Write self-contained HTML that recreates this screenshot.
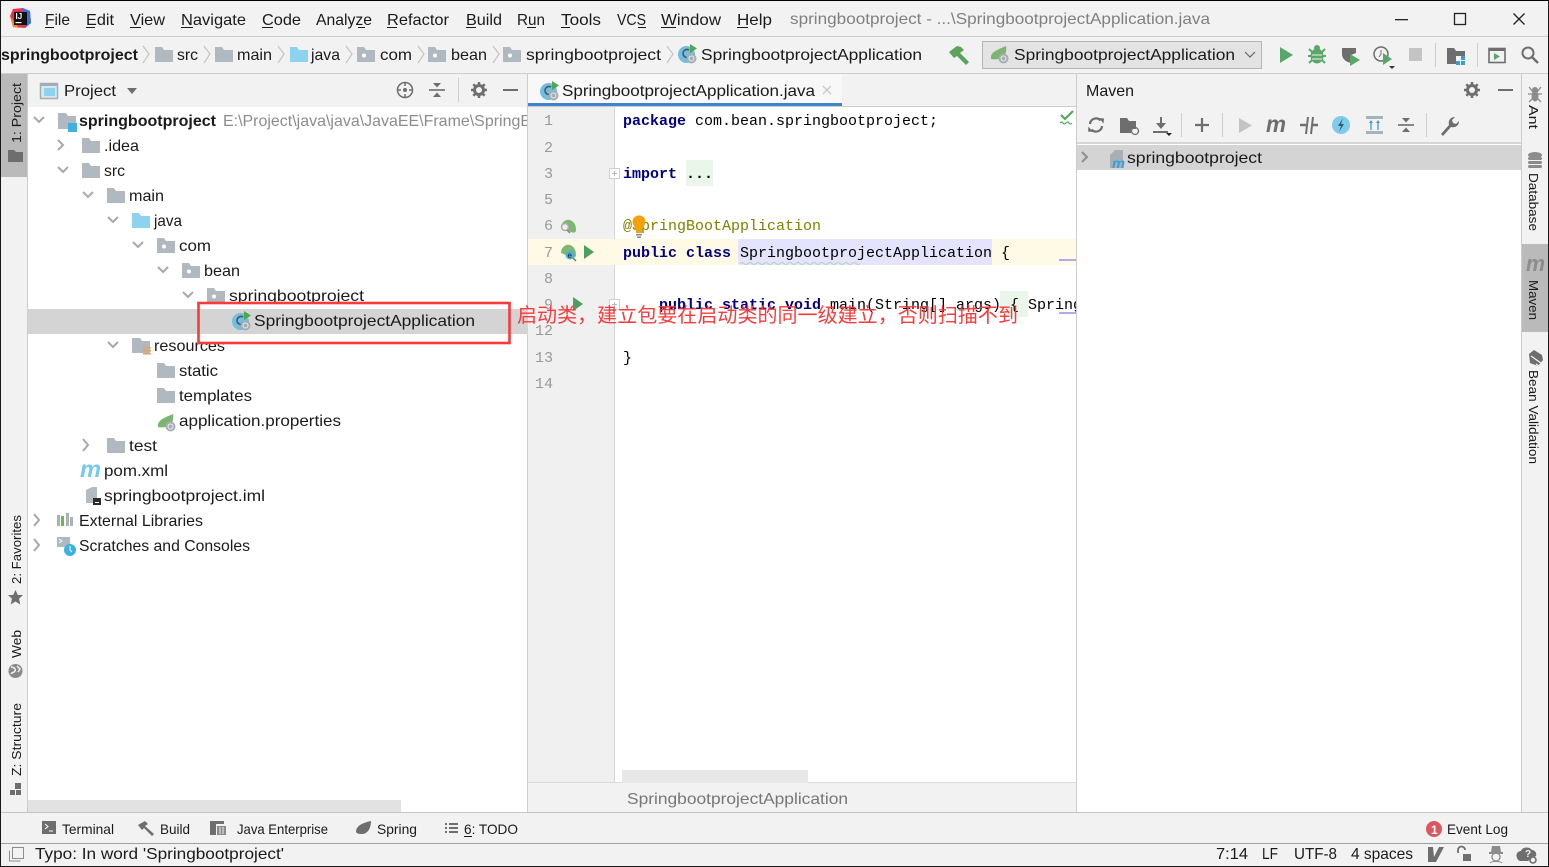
<!DOCTYPE html>
<html><head><meta charset="utf-8"><style>
html,body{margin:0;padding:0;background:#fff;width:1549px;height:867px;overflow:hidden}
svg{display:block}
text{font-family:"Liberation Sans","Noto Sans CJK SC",sans-serif;font-size:16px;fill:#1a1a1a;white-space:pre}
.m{font-family:"Liberation Mono",monospace;font-size:15px}
.b{font-weight:bold}.k{font-family:"Liberation Mono",monospace;font-size:15px;font-weight:bold;fill:#000080}
.n{font-family:"Liberation Mono",monospace;font-size:15px;fill:#999;text-anchor:end}
.s{font-size:14px}.v{font-size:13px}
.ic{fill:none;stroke:#6e6e6e;stroke-width:2}
</style></head><body>
<svg xmlns="http://www.w3.org/2000/svg" width="1549" height="867" viewBox="0 0 1549 867">
<defs>
<symbol id="f" viewBox="0 0 18 15" overflow="visible"><path d="M0 0h7l2 3h9v12H0z" fill="#b0b9c0"/></symbol>
<symbol id="fb" viewBox="0 0 18 15" overflow="visible"><path d="M0 0h7l2 3h9v12H0z" fill="#8dd2ef"/></symbol>
<symbol id="fp" viewBox="0 0 18 15" overflow="visible"><path d="M0 0h7l2 3h9v12H0z" fill="#b0b9c0"/><circle cx="7" cy="8.5" r="2" fill="#fff"/></symbol>
<symbol id="cls" viewBox="0 0 20 20" overflow="visible"><circle cx="8.5" cy="10.5" r="8.5" fill="#74bde0"/><path d="M11 6A4 4 0 1 0 11 13" fill="none" stroke="#3f5a68" stroke-width="1.6"/><path d="M12 0l7 4.500-7 4.500z" fill="#4fa74f"/><circle cx="13.500" cy="14.500" r="5" fill="#a7aeb3"/><circle cx="13.500" cy="14.500" r="2.500" fill="none" stroke="#e9e9e9"/></symbol>
<symbol id="leaf" viewBox="0 0 20 18" overflow="visible"><path d="M1 13C0 6 7 4 16 0c1 6-1 12-7 13-3 .5-6 .5-8 0z" fill="#7cb56e"/><circle cx="13.500" cy="12.500" r="5" fill="#a7aeb3"/><circle cx="13.500" cy="12.500" r="2.500" fill="none" stroke="#eee"/></symbol>
<symbol id="gear" viewBox="0 0 16 16" overflow="visible"><circle cx="8" cy="8" r="4.500" fill="none" stroke="#6e6e6e" stroke-width="3"/><path d="M8 0v3M8 13v3M0 8h3M13 8h3M2.300 2.300l2 2M11.700 11.700l2 2M2.300 13.700l2-2M11.700 4.300l2-2" stroke="#6e6e6e" stroke-width="2.500"/></symbol>
<symbol id="coll" viewBox="0 0 16 16" overflow="visible"><path d="M0 8h16" stroke="#6e6e6e" stroke-width="1.600"/><path d="M4 1h8L8 5.500zM4 15h8L8 10.500z" fill="#6e6e6e"/></symbol>
</defs>

<!-- base -->
<rect width="1549" height="867" fill="#f2f2f2"/>
<rect x="28" y="107" width="499" height="705" fill="#fff"/>
<rect x="1077" y="143" width="444" height="669" fill="#fff"/>
<rect x="615" y="107" width="461" height="676" fill="#fff"/>
<rect x="528" y="107" width="87" height="676" fill="#f0f0f0"/>

<!-- lines -->
<rect y="36" width="1549" height="1" fill="#cdcdcd"/>
<rect y="73" width="1549" height="1" fill="#cdcdcd"/>
<rect x="27" y="74" width="1" height="738" fill="#cdcdcd"/>
<rect x="527" y="74" width="1" height="738" fill="#cdcdcd"/>
<rect x="1076" y="74" width="1" height="738" fill="#cdcdcd"/>
<rect x="1521" y="74" width="1" height="738" fill="#cdcdcd"/>
<rect y="812" x="0" width="1549" height="1" fill="#c4c4c4"/>
<rect y="843" x="0" width="1549" height="1" fill="#9f9f9f"/>
<rect x="528" y="106" width="548" height="1" fill="#cdcdcd"/>
<rect x="1077" y="142" width="444" height="2" fill="#d6d6d6"/>
<rect x="614" y="107" width="1" height="676" fill="#d5d5d5"/>
<rect x="528" y="782" width="548" height="1" fill="#dcdcdc"/>

<!-- title / menu -->
<g transform="translate(10,8)">
<path d="M3 1L13 0 20 3 21 15 15 20 3 19 0 8z" fill="#e8334e"/><path d="M12 0l8 3 1 12-6 5z" fill="#3d6fe0"/><path d="M0 8l3 11 6 1z" fill="#f08a24"/>
<rect x="4" y="4" width="13" height="13" fill="#111"/><text x="5.500" y="11" style="font-size:8px;font-weight:bold;fill:#fff">IJ</text><rect x="5.500" y="14" width="6" height="1.200" fill="#fff"/>
</g>
<text x="45" y="25" textLength="25" lengthAdjust="spacingAndGlyphs">File</text>
<text x="86" y="25" textLength="28" lengthAdjust="spacingAndGlyphs">Edit</text>
<text x="130" y="25" textLength="35" lengthAdjust="spacingAndGlyphs">View</text>
<text x="181" y="25" textLength="65" lengthAdjust="spacingAndGlyphs">Navigate</text>
<text x="262" y="25" textLength="39" lengthAdjust="spacingAndGlyphs">Code</text>
<text x="316" y="25" textLength="56" lengthAdjust="spacingAndGlyphs">Analyze</text>
<text x="387" y="25" textLength="62" lengthAdjust="spacingAndGlyphs">Refactor</text>
<text x="466" y="25" textLength="36" lengthAdjust="spacingAndGlyphs">Build</text>
<text x="517" y="25" textLength="28" lengthAdjust="spacingAndGlyphs">Run</text>
<text x="561" y="25" textLength="40" lengthAdjust="spacingAndGlyphs">Tools</text>
<text x="617" y="25" textLength="29" lengthAdjust="spacingAndGlyphs">VCS</text>
<text x="661" y="25" textLength="60" lengthAdjust="spacingAndGlyphs">Window</text>
<text x="737" y="25" textLength="35" lengthAdjust="spacingAndGlyphs">Help</text>
<g fill="#1a1a1a">
<rect x="45" y="27" width="9" height="1"/><rect x="86" y="27" width="9" height="1"/><rect x="130" y="27" width="11" height="1"/><rect x="181" y="27" width="12" height="1"/><rect x="262" y="27" width="11" height="1"/><rect x="358" y="27" width="7" height="1"/><rect x="387" y="27" width="10" height="1"/><rect x="466" y="27" width="10" height="1"/><rect x="527" y="27" width="9" height="1"/><rect x="561" y="27" width="9" height="1"/><rect x="638" y="27" width="8" height="1"/><rect x="661" y="27" width="15" height="1"/><rect x="737" y="27" width="11" height="1"/>
</g>
<text x="790" y="24" textLength="420" lengthAdjust="spacingAndGlyphs" style="fill:#808080">springbootproject - ...\SpringbootprojectApplication.java</text>
<rect x="1395" y="19" width="13" height="1.300" fill="#222"/>
<rect x="1454.500" y="13.500" width="11" height="11" fill="none" stroke="#222" stroke-width="1.300"/>
<path d="M1513.500 13.500l11 11M1524.500 13.500l-11 11" stroke="#222" stroke-width="1.300"/>

<!-- nav bar -->
<text class="b" x="1" y="60" textLength="137" lengthAdjust="spacingAndGlyphs">springbootproject</text>
<g fill="none" stroke="#c4c4c4" stroke-width="1.200">
<path d="M143 46l6 8-6 9M204 46l6 8-6 9M278 46l6 8-6 9M346 46l6 8-6 9M418 46l6 8-6 9M493 46l6 8-6 9M667 46l6 8-6 9"/>
</g>
<use href="#f" x="155" y="47" width="18" height="15"/><text x="177" y="60" textLength="21" lengthAdjust="spacingAndGlyphs">src</text>
<use href="#f" x="215" y="47" width="18" height="15"/><text x="237" y="60" textLength="35" lengthAdjust="spacingAndGlyphs">main</text>
<use href="#fb" x="290" y="47" width="18" height="15"/><text x="311" y="60" textLength="29" lengthAdjust="spacingAndGlyphs">java</text>
<use href="#fp" x="357" y="47" width="18" height="15"/><text x="380" y="60" textLength="32" lengthAdjust="spacingAndGlyphs">com</text>
<use href="#fp" x="428" y="47" width="18" height="15"/><text x="451" y="60" textLength="36" lengthAdjust="spacingAndGlyphs">bean</text>
<use href="#fp" x="503" y="47" width="18" height="15"/><text x="526" y="60" textLength="135" lengthAdjust="spacingAndGlyphs">springbootproject</text>
<use href="#cls" x="678" y="44" width="20" height="20"/><text x="701" y="60" textLength="221" lengthAdjust="spacingAndGlyphs">SpringbootprojectApplication</text>
<!-- hammer -->
<path d="M949 52l8-6 4 1 3 3-4 3 9 9-3 3-9-9-3 2z" fill="#5ba35b"/>
<!-- combo -->
<rect x="982.500" y="41.500" width="279" height="27" fill="#e3e3e3" stroke="#b4b4b4"/>
<use href="#leaf" x="990" y="46" width="20" height="18"/>
<text x="1014" y="60" textLength="221" lengthAdjust="spacingAndGlyphs">SpringbootprojectApplication</text>
<path d="M1245 52l5 5 5-5" fill="none" stroke="#666" stroke-width="1.200"/>
<!-- run icons -->
<path d="M1280 47l13 8-13 8z" fill="#59a869"/>
<g fill="#59a869"><ellipse cx="1317" cy="56" rx="6.500" ry="7.500"/><path d="M1309 49l3 3M1325 49l-3 3M1308 56h4M1326 56h-4M1309 63l3-3M1325 63l-3-3" stroke="#59a869" stroke-width="2"/><circle cx="1317" cy="48" r="3"/></g>
<path d="M1312 55h10M1312 59h10" stroke="#f2f2f2"/>
<path d="M1342 48h14v5l-5 2v8c-5-1-9-4-9-9z" fill="#6e6e6e"/><path d="M1350 54l10 6-10 6z" fill="#59a869"/>
<circle cx="1381" cy="54" r="7" fill="none" stroke="#6e6e6e" stroke-width="1.500"/><path d="M1381 50v4l-2 3" stroke="#6e6e6e" fill="none"/><path d="M1383 53l9 6-9 6z" fill="#59a869"/><path d="M1389 66h6l-3 3z" fill="#333"/>
<rect x="1409" y="48" width="13" height="13" fill="#c4c4c4"/>
<rect x="1435" y="43" width="1" height="24" fill="#cdcdcd"/>
<path d="M1447 48h7l2 3h9v13h-18z" fill="#6e6e6e"/><rect x="1456" y="56" width="9" height="9" fill="#f2f2f2"/><g fill="#389fd6"><rect x="1461" y="56" width="4" height="4"/><rect x="1456" y="61" width="4" height="4"/><rect x="1461" y="61" width="4" height="4"/></g>
<rect x="1477" y="43" width="1" height="24" fill="#cdcdcd"/>
<rect x="1489" y="48.500" width="16" height="14" fill="none" stroke="#6e6e6e" stroke-width="1.600"/><rect x="1489" y="48" width="16" height="3" fill="#6e6e6e"/><path d="M1494 53l6 3.500-6 3.500z" fill="#59a869"/>
<circle cx="1528" cy="53" r="5.500" fill="none" stroke="#6e6e6e" stroke-width="2"/><path d="M1532 57l6 6" stroke="#6e6e6e" stroke-width="2.400"/>

<!-- left strip -->
<rect x="1" y="74" width="26" height="103" fill="#bababa"/>
<text class="v" transform="translate(21,143) rotate(-90)" textLength="60" lengthAdjust="spacingAndGlyphs">1: Project</text>
<path d="M8 150h6l2 2h7v10H8z" fill="#6e6e6e"/>
<text class="v" transform="translate(21,584) rotate(-90)" textLength="69" lengthAdjust="spacingAndGlyphs">2: Favorites</text>
<path d="M15.500 590l2.300 5h5.200l-4 3.800 1.300 5.700-4.800-3-4.800 3 1.300-5.700-4-3.800h5.200z" fill="#6e6e6e"/>
<text class="v" transform="translate(21,658) rotate(-90)" textLength="28" lengthAdjust="spacingAndGlyphs">Web</text>
<circle cx="15.500" cy="671" r="7" fill="#8a8a8a"/><path d="M11 667c3 0 5 2 4 4s-3 1-4 3M17 666l3 3-2 3" fill="none" stroke="#f2f2f2" stroke-width="1.500"/>
<text class="v" transform="translate(21,776) rotate(-90)" textLength="73" lengthAdjust="spacingAndGlyphs">Z: Structure</text>
<g fill="#6e6e6e"><rect x="15" y="783" width="6" height="6"/><rect x="10" y="790" width="5" height="5"/><rect x="16" y="790" width="5" height="5"/></g>

<!-- project header -->
<rect x="40.500" y="83.500" width="17" height="15" fill="#d6e9f2" stroke="#a5acb2" stroke-width="1.500"/><rect x="40" y="83" width="18" height="3" fill="#a5acb2"/>
<rect x="44" y="88" width="11" height="8" fill="#8dd2ef"/>
<text x="64" y="96" textLength="52" lengthAdjust="spacingAndGlyphs">Project</text>
<path d="M127 88h10l-5 6z" fill="#6e6e6e"/>
<circle cx="405" cy="90" r="7.500" fill="none" stroke="#6e6e6e" stroke-width="1.500"/><circle cx="405" cy="90" r="2" fill="#6e6e6e"/><path d="M405 82v4M405 94v4M397 90h4M409 90h4" stroke="#6e6e6e" stroke-width="1.500"/>
<use href="#coll" x="429" y="82" width="16" height="16"/>
<rect x="458" y="78" width="1" height="24" fill="#cdcdcd"/>
<use href="#gear" x="471" y="82" width="16" height="16"/>
<rect x="503" y="89" width="15" height="2" fill="#6e6e6e"/>

<!-- tree -->
<g fill="none" stroke="#a8a8a8" stroke-width="2">
<path d="M34 117l5 5 5-5M58 140l5 5 -5 5M58 167l5 5 5-5M83 192l5 5 5-5M108 217l5 5 5-5M133 242l5 5 5-5M158 267l5 5 5-5M183 292l5 5 5-5M108 342l5 5 5-5M83 439l5 6-5 6M34 514l5 6-5 6M34 539l5 6-5 6" />
</g>
<path d="M58 113h8l2 3h8v13H58z" fill="#b0b9c0"/><rect x="68" y="123" width="9" height="9" fill="#3fb0e0"/>
<text class="b" x="79" y="126" textLength="137" lengthAdjust="spacingAndGlyphs">springbootproject</text>
<svg x="223" y="110" width="304" height="24"><text x="0" y="16" textLength="308" lengthAdjust="spacingAndGlyphs" style="fill:#8c8c8c">E:\Project\java\java\JavaEE\Frame\SpringB</text></svg>
<use href="#f" x="82" y="138" width="18" height="15"/><text x="104" y="151" textLength="35" lengthAdjust="spacingAndGlyphs">.idea</text>
<use href="#f" x="82" y="163" width="18" height="15"/><text x="104" y="176" textLength="21" lengthAdjust="spacingAndGlyphs">src</text>
<use href="#f" x="107" y="188" width="18" height="15"/><text x="129" y="201" textLength="35" lengthAdjust="spacingAndGlyphs">main</text>
<use href="#fb" x="132" y="213" width="18" height="15"/><text x="154" y="226" textLength="28" lengthAdjust="spacingAndGlyphs">java</text>
<use href="#fp" x="157" y="238" width="18" height="15"/><text x="179" y="251" textLength="32" lengthAdjust="spacingAndGlyphs">com</text>
<use href="#fp" x="182" y="263" width="18" height="15"/><text x="204" y="276" textLength="36" lengthAdjust="spacingAndGlyphs">bean</text>
<use href="#fp" x="207" y="288" width="18" height="15"/><text x="229" y="301" textLength="135" lengthAdjust="spacingAndGlyphs">springbootproject</text>

<!-- resources row first so red box clips it -->
<path d="M132 338h8l2 3h8v12h-18z" fill="#b0b9c0"/><g fill="#e2a35c"><rect x="143" y="347" width="8" height="1.500"/><rect x="143" y="350" width="8" height="1.500"/><rect x="143" y="353" width="8" height="1.500"/></g>
<text x="154" y="351" textLength="71" lengthAdjust="spacingAndGlyphs">resources</text>

<!-- selected row + red box -->
<rect x="199" y="303" width="310" height="41" fill="#fff"/>
<rect x="28" y="309" width="499" height="25" fill="#d4d4d4"/>
<use href="#cls" x="232" y="311" width="20" height="20"/>
<text x="254" y="326" textLength="221" lengthAdjust="spacingAndGlyphs">SpringbootprojectApplication</text>
<rect x="198.500" y="303" width="311" height="40" fill="none" stroke="#f93a3a" stroke-width="2.600"/>

<use href="#f" x="157" y="363" width="18" height="15"/><text x="179" y="376" textLength="39" lengthAdjust="spacingAndGlyphs">static</text>
<use href="#f" x="157" y="388" width="18" height="15"/><text x="179" y="401" textLength="73" lengthAdjust="spacingAndGlyphs">templates</text>
<use href="#leaf" x="157" y="414" width="20" height="18"/><text x="179" y="426" textLength="162" lengthAdjust="spacingAndGlyphs">application.properties</text>
<use href="#f" x="107" y="438" width="18" height="15"/><text x="129" y="451" textLength="28" lengthAdjust="spacingAndGlyphs">test</text>
<text x="80" y="477" textLength="21" lengthAdjust="spacingAndGlyphs" style="font-size:23px;font-weight:bold;font-style:italic;fill:#75c9ec">m</text><text x="104" y="476" textLength="64" lengthAdjust="spacingAndGlyphs">pom.xml</text>
<path d="M86 490l6-3h5v16h-11z" fill="#b4bcc2"/><rect x="93" y="498" width="8" height="7" fill="#2b2b2b"/><rect x="95" y="502" width="4" height="1" fill="#fff"/>
<text x="104" y="501" textLength="161" lengthAdjust="spacingAndGlyphs">springbootproject.iml</text>
<g fill="#a9b2b9"><rect x="57" y="515" width="3" height="11"/><rect x="66" y="513" width="3" height="13"/><rect x="70" y="517" width="3" height="9"/></g><rect x="61" y="516" width="3" height="10" fill="#6fb64d"/>
<text x="79" y="526" textLength="124" lengthAdjust="spacingAndGlyphs">External Libraries</text>
<rect x="57" y="537" width="13" height="10" fill="#b0b9c0"/><path d="M59 539l3 2-3 2" fill="none" stroke="#fff"/><circle cx="70" cy="550" r="6" fill="#3cb0e0"/><path d="M70 546v4l2 2" stroke="#fff" fill="none"/>
<text x="79" y="551" textLength="171" lengthAdjust="spacingAndGlyphs">Scratches and Consoles</text>
<rect x="28" y="800" width="373" height="12" fill="#e2e2e2"/>

<!-- tabs -->
<rect x="528" y="74" width="314" height="29" fill="#f8f8f8"/>
<rect x="528" y="103" width="314" height="3" fill="#4083c9"/>
<use href="#cls" x="540" y="81" width="20" height="20"/>
<text x="562" y="96" textLength="253" lengthAdjust="spacingAndGlyphs">SpringbootprojectApplication.java</text>
<path d="M823 86l8 8M831 86l-8 8" stroke="#c8c8c8" stroke-width="1.300"/>

<!-- editor -->
<rect x="528" y="239" width="87" height="26" fill="#fff9e6"/>
<rect x="615" y="239" width="461" height="26" fill="#fffae6"/>
<rect x="738" y="239" width="254" height="26" fill="#e4e4ff"/>
<rect x="686" y="160" width="27" height="26" fill="#e9f6e9"/>
<rect x="1000" y="291" width="28" height="26" fill="#e9f6e9"/>
<path d="M740 263.500q2 -2 4 0t4 0 4 0 4 0 4 0 4 0 4 0 4 0 4 0 4 0 4 0 4 0 4 0 4 0 4 0 4 0 4 0 4 0 4 0 4 0 4 0 4 0 4 0 4 0 4 0 4 0 4 0 4 0 4 0 4 0" fill="none" stroke="#b6d0b6"/>
<g>
<text class="n" x="553" y="125">1</text><text class="n" x="553" y="152">2</text><text class="n" x="553" y="178">3</text><text class="n" x="553" y="204">5</text><text class="n" x="553" y="230">6</text><text class="n" x="553" y="257">7</text><text class="n" x="553" y="283">8</text><text class="n" x="553" y="309">9</text><text class="n" x="553" y="335">12</text><text class="n" x="553" y="362">13</text><text class="n" x="553" y="388">14</text>
</g>
<text class="k" x="623" y="125">package</text><text class="m" x="695" y="125" style="fill:#000">com.bean.springbootproject;</text>
<rect x="609.500" y="168.500" width="10" height="10" fill="#fff" stroke="#d0d0d0"/><path d="M612 173.500h5M614.500 171v5" stroke="#b8b8b8"/>
<text class="k" x="623" y="178">import</text><text class="m" x="686" y="178" style="fill:#000;font-weight:bold">...</text>
<text class="m" x="623" y="230" style="fill:#808000">@SpringBootApplication</text>
<path d="M634 226a6.500 6.500 0 1 1 10 0l-2 5v2h-6v-2z" fill="#f0a30a"/><rect x="636" y="234" width="6" height="1.500" fill="#888"/><rect x="637" y="236.500" width="4" height="1.500" fill="#888"/>
<path d="M561 228c0-6 5-9 9-8 5 2 6 6 6 10 0 3-3 3-5 2z" fill="#7db86e"/><circle cx="565" cy="227" r="3.500" fill="#eee" stroke="#aaa" stroke-width="1.500"/><path d="M567 230l3 3" stroke="#888" stroke-width="1.500"/>
<path d="M561 253c0-6 5-9 9-8 5 2 6 6 6 10 0 3-3 3-5 2z" fill="#7db86e"/><circle cx="570" cy="255" r="4.500" fill="#4db2db"/><text x="567.500" y="258" style="font-size:8px;fill:#222">e</text><path d="M573 258l3 3" stroke="#777" stroke-width="1.500"/>
<path d="M584 245l10 7-10 7z" fill="#4d9e5f"/>
<text class="k" x="623" y="257">public</text><text class="k" x="686" y="257">class</text>
<text class="m" x="740" y="257" style="fill:#000">SpringbootprojectApplication</text><text class="m" x="1001" y="257" style="fill:#000">{</text>
<path d="M573 297l10 7-10 7z" fill="#4d9e5f"/>
<rect x="609.500" y="299.500" width="10" height="10" fill="#fff" stroke="#d0d0d0"/><path d="M612 304.500h5M614.500 302v5" stroke="#b8b8b8"/>
<text class="k" x="659" y="309">public</text><text class="k" x="722" y="309">static</text><text class="k" x="785" y="309">void</text>
<text class="m" x="830" y="309" style="fill:#000">main(String[] args)</text><text class="m" x="1010" y="309" style="fill:#000">{</text>
<svg x="1028" y="295" width="48" height="24"><text class="m" x="0" y="14" style="fill:#000">Spring</text></svg>
<text class="m" x="623" y="362" style="fill:#000">}</text>
<rect x="1059" y="259" width="17" height="2" fill="#b9a7ee"/>
<rect x="1059" y="312" width="17" height="2" fill="#b9a7ee"/>
<path d="M1061 115l4 4 8-8" fill="none" stroke="#52a85c" stroke-width="2.200"/><path d="M1060 123q2-2 3 0t3 0 3 0 3 0" fill="none" stroke="#52a85c" stroke-width="1.200"/>
<rect x="622" y="770" width="186" height="13" fill="#e8e8e8"/>
<rect x="528" y="783" width="548" height="29" fill="#f2f2f2"/>
<text x="627" y="804" textLength="221" lengthAdjust="spacingAndGlyphs" style="fill:#777">SpringbootprojectApplication</text>

<!-- Red annotation -->
<rect x="518" y="309" width="10" height="25" fill="#d4d4d4"/>
<text x="517" y="322" textLength="501" lengthAdjust="spacingAndGlyphs" style="font-size:20px;fill:#f93a3a;font-family:'Noto Sans CJK SC','WenQuanYi Zen Hei',sans-serif;font-weight:400">启动类，建立包要在启动类的同一级建立，否则扫描不到</text>

<!-- Maven -->
<text x="1086" y="96" textLength="48" lengthAdjust="spacingAndGlyphs">Maven</text>
<use href="#gear" x="1464" y="82" width="16" height="16"/>
<rect x="1498" y="89" width="15" height="2" fill="#6e6e6e"/>
<g fill="none" stroke="#6e6e6e" stroke-width="2.200"><path d="M1090 124a6 6 0 0 1 10.500-3.500M1102 126a6 6 0 0 1-10.500 3.500"/></g>
<path d="M1099 118l5 .5-.5 5zM1093 132l-5-.5.5-5z" fill="#6e6e6e"/>
<path d="M1120 118h7l2 3h7v8h-5v4h-11z" fill="#6e6e6e"/><circle cx="1135" cy="131" r="3.500" fill="none" stroke="#6e6e6e" stroke-width="1.300"/>
<path d="M1161 117v10" stroke="#6e6e6e" stroke-width="2"/><path d="M1156 123h10l-5 6z" fill="#6e6e6e"/><rect x="1153" y="131" width="15" height="2" fill="#6e6e6e"/><path d="M1166 133h6l-3 3z" fill="#222"/>
<rect x="1181" y="113" width="1" height="24" fill="#cdcdcd"/>
<path d="M1202 118v14M1195 125h14" stroke="#6e6e6e" stroke-width="2.200"/>
<rect x="1222" y="113" width="1" height="24" fill="#cdcdcd"/>
<path d="M1239 118l13 7.500-13 7.500z" fill="#c4c4c4"/>
<text x="1266" y="132" textLength="20" lengthAdjust="spacingAndGlyphs" style="font-size:23px;font-weight:bold;font-style:italic;fill:#6e6e6e">m</text>
<path d="M1300 125h6M1312 125h6" stroke="#6e6e6e" stroke-width="2.400"/><path d="M1308 117l-2 17M1313 117l-2 17" stroke="#6e6e6e" stroke-width="2"/>
<circle cx="1341" cy="125" r="9" fill="#7fcbec"/><path d="M1343 118l-5 8h3l-2 6 5-8h-3z" fill="#3a5a6a"/>
<rect x="1366" y="116" width="17" height="3" fill="#aab2b8"/><rect x="1366" y="131" width="17" height="3" fill="#aab2b8"/><path d="M1371 130v-8M1378 130v-8" stroke="#389fd6" stroke-width="1.300"/><path d="M1369 123l2-3 2 3zM1376 123l2-3 2 3z" fill="#389fd6"/>
<use href="#coll" x="1398" y="117" width="16" height="16"/>
<rect x="1426" y="113" width="1" height="24" fill="#cdcdcd"/>
<path d="M1441 134l8-9c-1-4 1-8 6-8l-3 3 1 3 3 1 3-3c0 5-4 7-8 6l-8 9z" fill="#6e6e6e"/>
<rect x="1077" y="145" width="444" height="25" fill="#d4d4d4"/>
<path d="M1082 152l5 5-5 5" fill="none" stroke="#8f8f8f" stroke-width="2"/>
<path d="M1110 155l5-5h8v18h-13z" fill="#a6afb6"/><text x="1112" y="168" textLength="13" lengthAdjust="spacingAndGlyphs" style="font-size:14px;font-weight:bold;font-style:italic;fill:#389fd6">m</text>
<text x="1127" y="163" textLength="135" lengthAdjust="spacingAndGlyphs">springbootproject</text>

<!-- right strip -->
<rect x="1522" y="244" width="26" height="88" fill="#bababa"/>
<g fill="#8c8c8c" stroke="#8c8c8c"><circle cx="1535" cy="90" r="2.500"/><ellipse cx="1535" cy="96" rx="3" ry="5"/><path d="M1529 87l4 5M1541 87l-4 5M1528 94h14M1529 102l4-4M1541 102l-4-4" fill="none" stroke-width="1.300"/></g>
<text class="v" transform="translate(1529,105) rotate(90)" textLength="24" lengthAdjust="spacingAndGlyphs">Ant</text>
<g fill="#8c8c8c"><ellipse cx="1535" cy="155" rx="7" ry="3"/><rect x="1528" y="157" width="14" height="3" rx="1.500"/><rect x="1528" y="161" width="14" height="3" rx="1.500"/><rect x="1528" y="165" width="14" height="3" rx="1.500"/></g>
<text class="v" transform="translate(1529,173) rotate(90)" textLength="58" lengthAdjust="spacingAndGlyphs">Database</text>
<text x="1526" y="271" textLength="19" lengthAdjust="spacingAndGlyphs" style="font-size:22px;font-weight:bold;font-style:italic;fill:#8c8c8c">m</text>
<text class="v" transform="translate(1529,280) rotate(90)" textLength="40" lengthAdjust="spacingAndGlyphs">Maven</text>
<path d="M1529 354l5-4 8 5 1 5-5 6-8-3z" fill="#6e6e6e"/><path d="M1531 356l10 7M1536 364l3 2 4-4" stroke="#f2f2f2" stroke-width="1.300" fill="none"/>
<text class="v" transform="translate(1529,370) rotate(90)" textLength="94" lengthAdjust="spacingAndGlyphs">Bean Validation</text>

<!-- bottom tool bar -->
<rect x="42" y="821" width="14" height="13" fill="#6e6e6e"/><path d="M45 824l3 2.500-3 2.500M49 831h4" stroke="#fff" fill="none"/>
<text class="s" x="62" y="834" textLength="52" lengthAdjust="spacingAndGlyphs">Terminal</text>
<path d="M138 825l7-4 3 3-3 2 9 8-2 2-8-8-2 2z" fill="#6e6e6e"/>
<text class="s" x="160" y="834" textLength="30" lengthAdjust="spacingAndGlyphs">Build</text>
<path d="M210 821h14v3h-8v11h-6z" fill="#6e6e6e"/><rect x="217" y="826" width="9" height="9" fill="#8a8a8a"/><path d="M220 827v7M223 827v7" stroke="#eee"/>
<text class="s" x="237" y="834" textLength="91" lengthAdjust="spacingAndGlyphs">Java Enterprise</text>
<path d="M356 832c0-6 6-9 15-11 0 8-4 13-9 13-2 0-5 0-6-2z" fill="#6e6e6e"/>
<text class="s" x="377" y="834" textLength="40" lengthAdjust="spacingAndGlyphs">Spring</text>
<g fill="#6e6e6e"><rect x="445" y="823" width="2" height="2"/><rect x="449" y="823" width="9" height="2"/><rect x="445" y="827" width="2" height="2"/><rect x="449" y="827" width="9" height="2"/><rect x="445" y="831" width="2" height="2"/><rect x="449" y="831" width="9" height="2"/></g>
<text class="s" x="464" y="834" textLength="54" lengthAdjust="spacingAndGlyphs">6: TODO</text><rect x="464" y="836" width="8" height="1" fill="#1a1a1a"/>
<circle cx="1434" cy="829" r="8" fill="#db5860"/><text x="1431" y="834" style="font-size:12px;font-weight:bold;fill:#fff">1</text>
<text class="s" x="1447" y="834" textLength="61" lengthAdjust="spacingAndGlyphs">Event Log</text>

<!-- status bar -->
<rect x="12.500" y="847.500" width="11" height="11" fill="none" stroke="#8c8c8c"/><path d="M9.500 850.500v10.500h11" fill="none" stroke="#8c8c8c"/>
<text x="35" y="859" textLength="249" lengthAdjust="spacingAndGlyphs">Typo: In word 'Springbootproject'</text>
<text x="1216" y="859" textLength="32" lengthAdjust="spacingAndGlyphs">7:14</text>
<text x="1262" y="859" textLength="16" lengthAdjust="spacingAndGlyphs">LF</text>
<text x="1294" y="859" textLength="43" lengthAdjust="spacingAndGlyphs">UTF-8</text>
<text x="1351" y="859" textLength="62" lengthAdjust="spacingAndGlyphs">4 spaces</text>
<path d="M1428 847h5l1 10 5-10h5l-8 15h-8z" fill="#6e6e6e"/>
<path d="M1458 853v-3a3.500 3.500 0 0 1 7 0" fill="none" stroke="#6e6e6e" stroke-width="1.800"/><rect x="1463" y="854" width="8" height="7" fill="#6e6e6e"/>
<path d="M1489 852h14v2h-14zM1492 846h8l1 6h-10z" fill="#8c8c8c"/><circle cx="1496" cy="857" r="4" fill="none" stroke="#8c8c8c" stroke-width="1.300"/><path d="M1490 863c1-2 11-2 12 0" stroke="#8c8c8c" fill="none"/>
<path d="M1517 858c-2-5 2-7 4-7 1-4 8-5 11-1 3 0 5 3 4 6l-8 5h-7c-2 0-3-1-4-3z" fill="#6e6e6e"/><text x="1525" y="857" style="font-size:10px;font-weight:bold;fill:#f2f2f2">?</text>
<circle cx="1533" cy="860" r="3" fill="#f2f2f2" stroke="#6e6e6e" stroke-width="1.600"/>

<!-- window frame -->
<rect width="1549" height="1" fill="#000"/>
<rect width="1" height="867" fill="#1a1a1a"/>
<rect x="1548" width="1" height="867" fill="#1a1a1a"/>
<rect y="866" width="1549" height="1" fill="#1a1a1a"/>
</svg>
</body></html>
